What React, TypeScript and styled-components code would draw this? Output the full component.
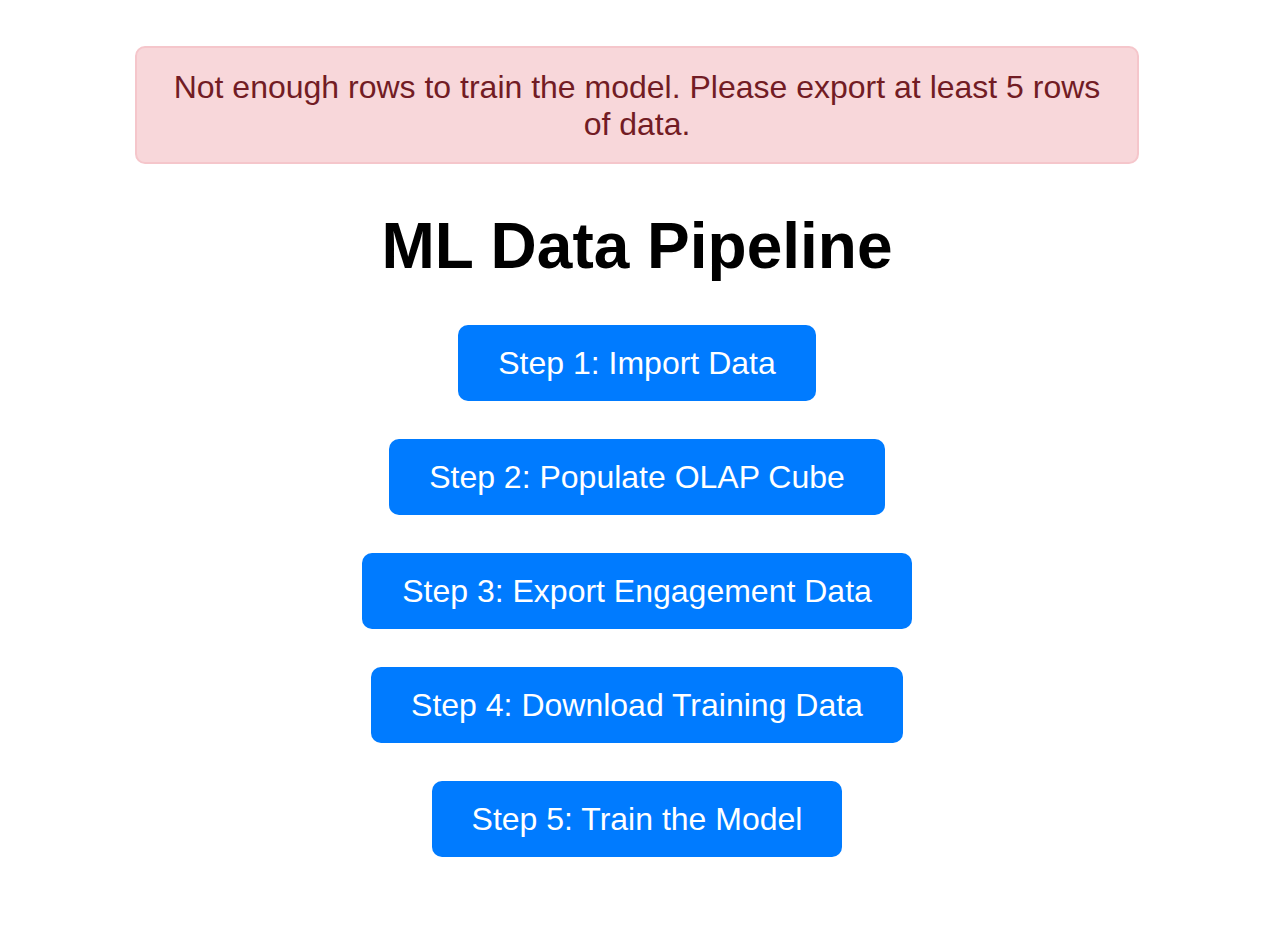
import React from 'react';
import styled, { createGlobalStyle } from 'styled-components';

const GlobalStyle = createGlobalStyle`
  body {
    margin: 0;
    background: #ffffff;
    font-family: "Liberation Sans", Arial, sans-serif;
  }
`;

const Page = styled.div`
  padding: 46px 0 40px 8px;
  display: flex;
  flex-direction: column;
  align-items: center;
`;

const Alert = styled.div`
  box-sizing: border-box;
  width: 1004px;
  padding: 21px 20px 19px;
  background-color: #f8d7da; /* alert-danger */
  border: 2px solid #f5c6cb;
  border-radius: 10px;
  color: #721c24;
  font-size: 32px;
  line-height: 37px;
  text-align: center;
`;

const Title = styled.h1`
  margin: 45px 0 42px;
  font-size: 64px;
  font-weight: bold;
  color: #000000;
`;

const StepList = styled.div`
  display: flex;
  flex-direction: column;
  align-items: center;
  gap: 38px;
`;

const StepButton = styled.button`
  padding: 20px 40px;
  border: none;
  border-radius: 10px;
  background-color: #007bff;
  color: #ffffff;
  font-family: "Liberation Sans", Arial, sans-serif;
  font-size: 32px;
  line-height: 36px;
  cursor: pointer;

  &:hover {
    background-color: #0069d9;
  }
`;

const steps = [
  'Step 1: Import Data',
  'Step 2: Populate OLAP Cube',
  'Step 3: Export Engagement Data',
  'Step 4: Download Training Data',
  'Step 5: Train the Model',
];

const App: React.FC = () => {
  return (
    <>
      <GlobalStyle />
      <Page>
        <Alert>
          Not enough rows to train the model. Please export at least 5 rows of data.
        </Alert>
        <Title>ML Data Pipeline</Title>
        <StepList>
          {steps.map((label) => (
            <StepButton key={label}>{label}</StepButton>
          ))}
        </StepList>
      </Page>
    </>
  );
};

export default App;
